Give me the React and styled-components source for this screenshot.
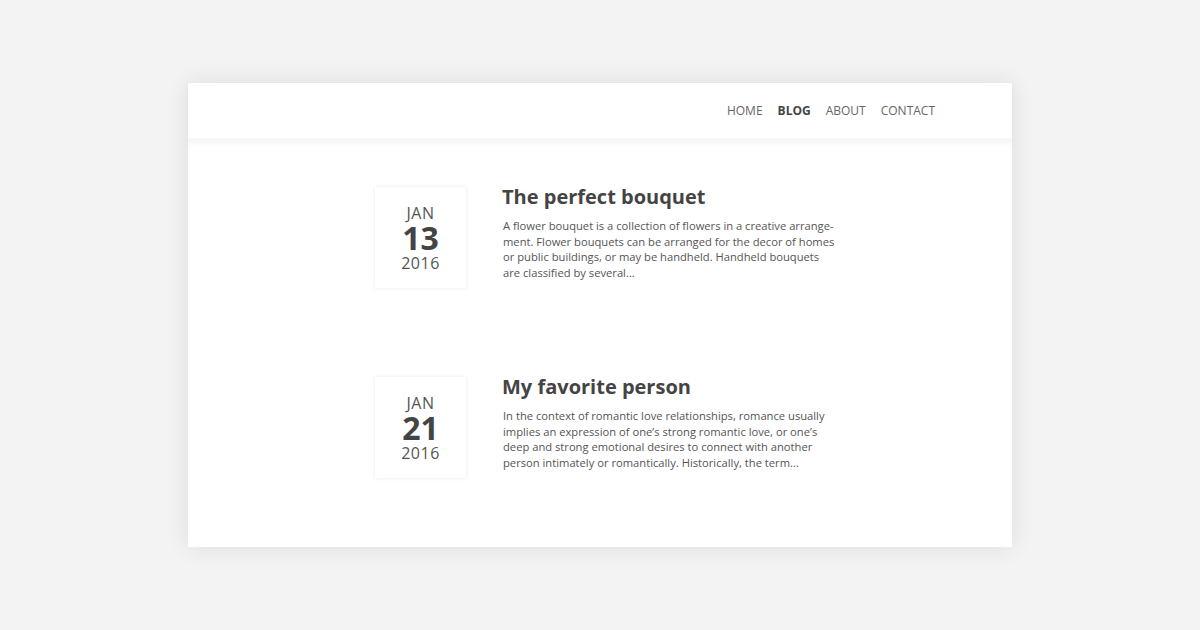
import React from 'react'
import styled, { createGlobalStyle } from 'styled-components'

const GlobalStyle = createGlobalStyle`
	html, body {
		margin: 0;
		padding: 0;
		background: #f3f3f3;
		font-family: 'Open Sans', 'Noto Sans', sans-serif;
	}
`

const Page = styled.div`
	width: 1200px;
	height: 630px;
	padding-top: 83px;
	box-sizing: border-box;
	display: flex;
	justify-content: center;
`

const Card = styled.div`
	width: 824px;
	height: 464px;
	background: #fff;
	box-shadow: 0 0 24px rgba(0, 0, 0, 0.09);
	display: flex;
	flex-direction: column;
`

const Header = styled.header`
	height: 55px;
	flex: none;
	display: flex;
	align-items: center;
	justify-content: flex-end;
	padding-right: 77px;
	box-shadow: 0 2px 4px rgba(0, 0, 0, 0.04);
	border-bottom: 4px solid #f7f7f7;
`

const Nav = styled.nav`
	display: flex;
	gap: 15px;
	padding-bottom: 1px;
`

const NavLink = styled.a`
	font-size: 12px;
	color: ${(p) => (p.active ? '#444' : '#666')};
	font-weight: ${(p) => (p.active ? 700 : 400)};
	text-decoration: none;
	text-transform: uppercase;
`

const Posts = styled.main`
	width: 450px;
	margin: 0 auto;
	padding-top: 45px;
	display: flex;
	flex-direction: column;
	gap: 89px;
`

const Post = styled.article`
	display: flex;
	gap: 36px;
`

const DateBox = styled.div`
	flex: none;
	width: 91px;
	height: 101px;
	background: #fff;
	box-shadow: 0 0 4px rgba(0, 0, 0, 0.09);
	display: flex;
	flex-direction: column;
	align-items: center;
	justify-content: center;
	color: #555;
`

const Month = styled.span`
	font-size: 16px;
	line-height: 20px;
	letter-spacing: 0.5px;
`

const Day = styled.span`
	font-size: 32px;
	font-weight: 700;
	line-height: 30px;
	color: #444;
`

const Year = styled.span`
	font-size: 16px;
	line-height: 20px;
	letter-spacing: 0.5px;
`

const Body = styled.div`
	flex: 1;
`

const Title = styled.h2`
	margin: -3px 0 8px;
	font-size: 20px;
	font-weight: 700;
	line-height: 26px;
	color: #444;
`

const Excerpt = styled.p`
	margin: 0 -13px 0 0;
	padding-left: 1px;
	font-size: 11.2px;
	line-height: 15.5px;
	color: #555;
`

const posts = [
	{
		month: 'Jan',
		day: 13,
		year: 2016,
		title: 'The perfect bouquet',
		text: 'A flower bouquet is a collection of flowers in a creative arrange\u00adment. Flower bouquets can be arranged for the decor of homes or public buildings, or may be handheld. Handheld bouquets are classified by several...',
	},
	{
		month: 'Jan',
		day: 21,
		year: 2016,
		title: 'My favorite person',
		text: 'In the context of romantic love relationships, romance usually implies an expression of one\u2019s strong romantic love, or one\u2019s deep and strong emotional desires to connect with another person intimately or romantically. Historically, the term...',
	},
]

const App = () => {
	return (
		<Page>
			<GlobalStyle />
			<Card>
				<Header>
					<Nav>
						<NavLink href='#'>Home</NavLink>
						<NavLink href='#' active>Blog</NavLink>
						<NavLink href='#'>About</NavLink>
						<NavLink href='#'>Contact</NavLink>
					</Nav>
				</Header>
				<Posts>
					{posts.map((post) => (
						<Post key={post.title}>
							<DateBox>
								<Month>{post.month.toUpperCase()}</Month>
								<Day>{post.day}</Day>
								<Year>{post.year}</Year>
							</DateBox>
							<Body>
								<Title>{post.title}</Title>
								<Excerpt>{post.text}</Excerpt>
							</Body>
						</Post>
					))}
				</Posts>
			</Card>
		</Page>
	)
}

export default App
